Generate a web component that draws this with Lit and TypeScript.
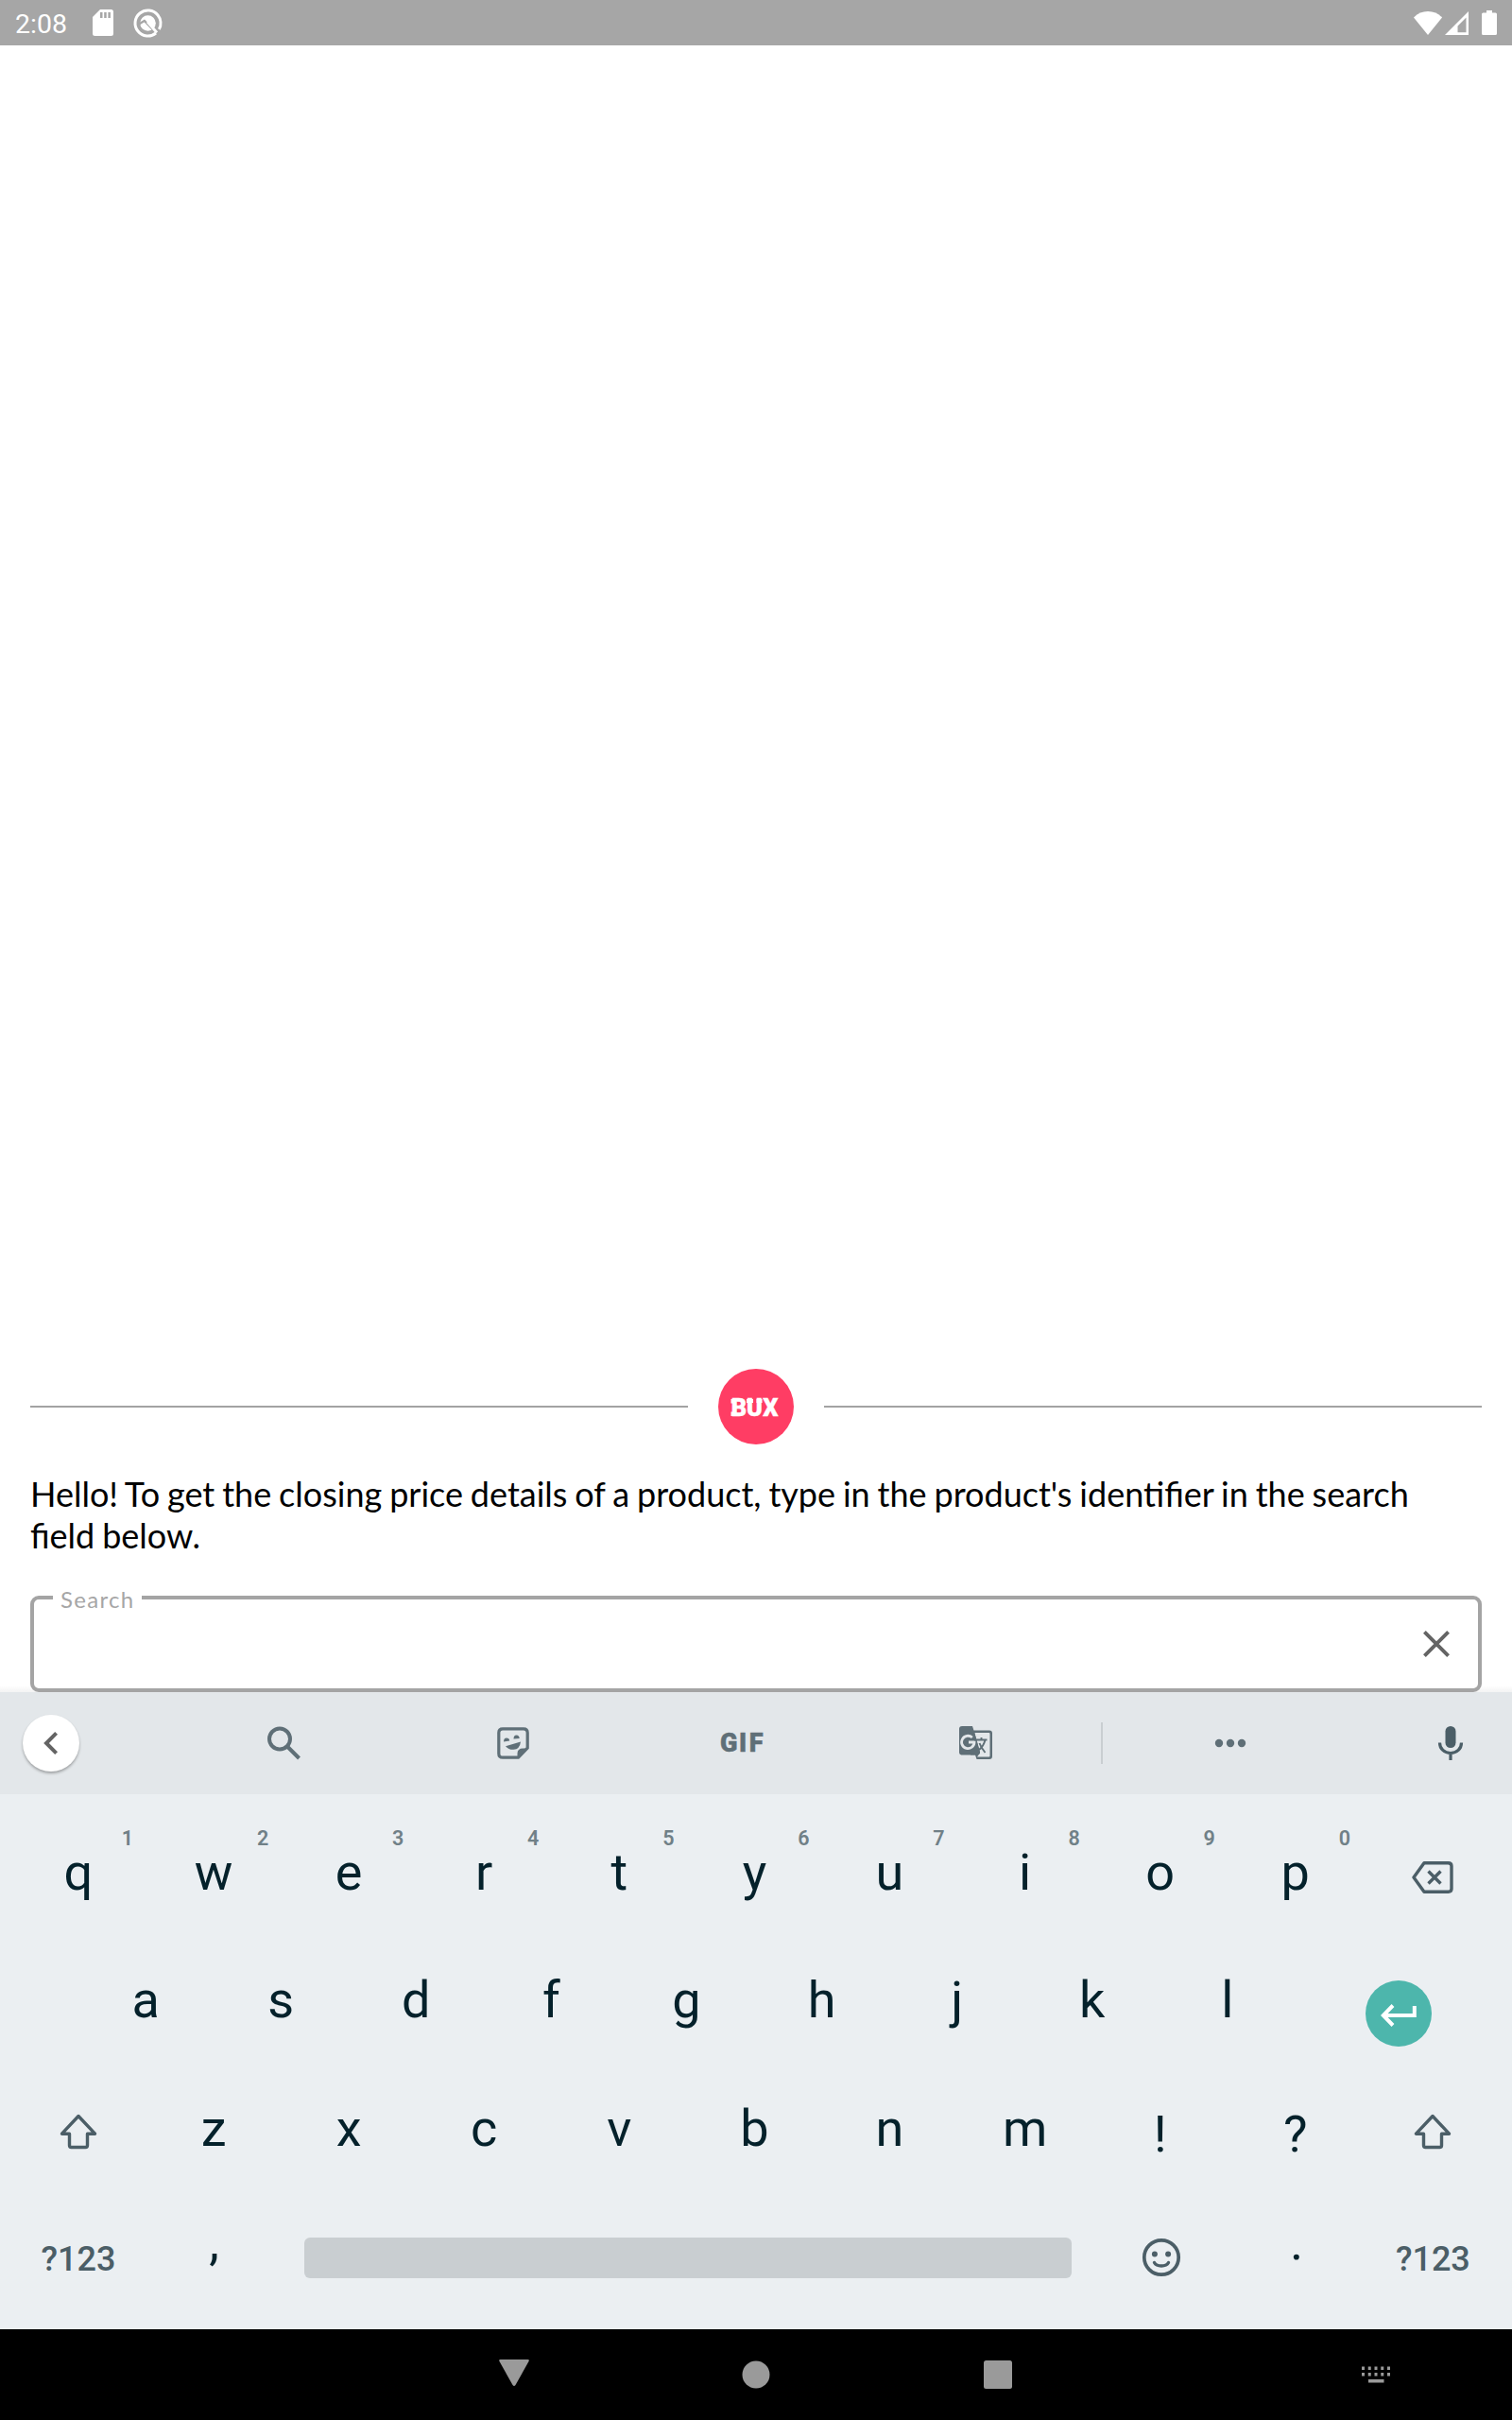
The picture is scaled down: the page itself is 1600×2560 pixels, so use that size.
import { LitElement, html, css, svg, nothing } from "lit";
import { customElement, property } from "lit/decorators.js";

type Glyph = ReturnType<typeof svg>;

const icon = (name: string, w: number, h: number, body: Glyph) =>
  html`<svg class="icon ${name}" width=${w} height=${h} viewBox="0 0 ${w} ${h}" aria-hidden="true">${body}</svg>`;

const sdCard = icon("sd", 22, 28, svg`<path fill-rule="evenodd" d="M8 0H19.5Q22 0 22 2.500V25.500Q22 28 19.500 28H2.500Q0 28 0 25.500V8ZM8 3V9H10.500V3ZM12.200 3V9H14.700V3ZM16.400 3V9H18.900V3Z"/>`);

const quick = icon("quick", 31, 31, svg`
  <circle cx="15.500" cy="15.500" r="13.500" fill="none" stroke="#fff" stroke-width="3" stroke-dasharray="79 5.800" transform="rotate(51 15.500 15.500)"/>
  <circle cx="15.500" cy="15.500" r="8.300"/>
  <path d="M6 16.500L11.800 13L22 23.500" fill="none" stroke="#a6a6a6" stroke-width="2.400"/>
  <path d="M15 14L25 25.500" stroke="#fff" stroke-width="2.800"/>`);

const wifi = icon("wifi", 30, 25, svg`<path d="M15 25L0 6.400Q6.500 0 15 0T30 6.400Z"/>`);
const signal = icon("signal", 25, 25, svg`<path fill-rule="evenodd" d="M25 0V25H0ZM22.500 6.500L13.500 15.500V22.300H22.500Z"/>`);
const battery = icon("battery", 16, 26, svg`<path d="M5 0H11V2.500H14.500Q16 2.500 16 4V24.500Q16 26 14.500 26H1.500Q0 26 0 24.500V4Q0 2.500 1.500 2.500H5Z"/>`);

const close = icon("close", 28, 28, svg`<path d="M1.400 1.400L26.600 26.600M26.600 1.400L1.400 26.600" fill="none" stroke="currentColor" stroke-width="3.900"/>`);
const chevron = icon("chevron", 15, 24, svg`<path d="M13.600 1.400L3 12L13.600 22.600" fill="none" stroke="currentColor" stroke-width="4"/>`);
const search = icon("search", 36, 36, svg`<g fill="none" stroke="currentColor" stroke-width="4"><circle cx="13" cy="13.500" r="11"/><path d="M21 21.500L33.500 34"/></g>`);
const sticker = icon("sticker", 34, 34, svg`
  <path d="M6 1.800H28Q32.200 1.800 32.200 6V22L22.500 32.200H6Q1.800 32.200 1.800 28V6Q1.800 1.800 6 1.800Z" fill="none" stroke="currentColor" stroke-width="3.200"/>
  <path d="M21.500 33V28Q21.500 22.500 27.500 22.500H33Z"/>
  <path d="M7 15.500Q7 11.500 10 11.500T13.200 14.500ZM17.500 12.500Q17.500 8.500 20.500 8.500T23.700 12Z"/>
  <path d="M9 20.200L25 15.500Q24 23.500 17.500 23.800Q12 24 9 20.200Z"/>`);
const translate = icon("translate", 36, 36, svg`
  <path d="M3 0H14L15.500 4.500H32Q35 4.500 35 7.500V32Q35 35 32 35H18.500L17 30.500H3Q0 30.500 0 27.500V3Q0 0 3 0Z"/>
  <path d="M16.300 7H31.500Q32.500 7 32.500 8V31.500Q32.500 32.500 31.500 32.500H19L22 28.500Z" fill="#e3e7ea"/>
  <path d="M16.300 7L22 27V29L18 30.500H12L10 10Z"/>
  <path d="M13.800 12A6.700 6.700 0 1 0 16 17H10" fill="none" stroke="#e3e7ea" stroke-width="2.800"/>
  <path d="M20.500 17L23 22L26 16Z" fill="#e3e7ea"/>
  <path d="M16 14.500H29.500M23.500 12V14.500M27.500 14.500Q26 21 21 25M21.500 18Q23 22.500 27.500 28" fill="none" stroke="currentColor" stroke-width="1.900"/>`);
const more = icon("more", 34, 10, svg`<circle cx="5" cy="5" r="4.200"/><circle cx="17" cy="5" r="4.200"/><circle cx="29" cy="5" r="4.200"/>`);
const mic = icon("mic", 26, 36, svg`<rect x="7.500" y="0" width="11" height="23" rx="5.500"/><path d="M1.500 17.500C1.500 24 6.500 28.500 13 28.500S24.500 24 24.500 17.500M13 28V36" fill="none" stroke="currentColor" stroke-width="3.200"/>`);
const backspace = icon("backspace", 44, 34, svg`<path d="M13 1.800H38.500Q42 1.800 42 5V29Q42 32.200 38.500 32.200H13L2 17Z" fill="none" stroke="currentColor" stroke-width="3.400" stroke-linejoin="round"/><path d="M17.500 10.500L30.500 23.500M30.500 10.500L17.500 23.500" fill="none" stroke="currentColor" stroke-width="3.400"/>`);
const shift = icon("shift", 40, 38, svg`<path d="M20 2.500L2.500 21.200H10.500V33.500Q10.500 35.500 12.500 35.500H27.500Q29.500 35.500 29.500 33.500V21.200H37.500Z" fill="none" stroke="currentColor" stroke-width="3.400" stroke-linejoin="round"/>`);
const enter = icon("enter", 38, 24, svg`<path d="M13 1.500L2.800 12L13 22.500M3 12H35.800V2" fill="none" stroke="currentColor" stroke-width="4"/>`);
const smile = icon("smile", 40, 40, svg`<circle cx="20" cy="20" r="18.200" fill="none" stroke="currentColor" stroke-width="3.700"/><circle cx="12.900" cy="16.400" r="3"/><circle cx="27.100" cy="16.400" r="3"/><path d="M12.500 25.500Q14.500 29 20 29T27.500 25.500" fill="none" stroke="currentColor" stroke-width="3.400" stroke-linecap="round"/>`);
const navBack = icon("nav-back", 32, 28, svg`<path d="M1.500 0H30.500Q32.500 0 31.500 2L17.500 27Q16 29 14.500 27L.5 2Q-.5 0 1.500 0Z"/>`);
const navHome = icon("nav-home", 30, 30, svg`<circle cx="15" cy="15" r="14.500"/>`);
const navRecent = icon("nav-recent", 30, 30, svg`<rect width="30" height="30" rx="2.500"/>`);
const navKeys = icon("nav-keys", 30, 18, svg`${[0, 6.75, 13.5, 20.25, 27].map(
  (x) => svg`<rect x=${x} y="0.500" width="3" height="3.500"/><rect x=${x} y="7" width="3" height="3.500"/>`,
)}<rect x="7" y="14" width="16.500" height="3.500"/>`);

@customElement("kb-key")
export class KbKey extends LitElement {
  @property() label = "";
  @property() hint = "";

  static styles = css`
    :host { display: block; position: relative; text-align: center; font: 400 54px/135.7px Roboto, sans-serif; color: #04212b; }
    .hint { position: absolute; left: 50%; top: 19.5px; width: 104px; font-size: 21.5px; line-height: 26px; font-weight: 600; color: #708087; }
  `;

  render() {
    return html`<span class="label">${this.label}</span>${this.hint ? html`<span class="hint">${this.hint}</span>` : nothing}`;
  }
}

@customElement("app-root")
export class AppRoot extends LitElement {
  static styles = css`
    :host { display: flex; flex-direction: column; width: 1600px; height: 2560px; background: #fff; overflow: hidden; font-family: Roboto, sans-serif; }
    * { box-sizing: border-box; }
    .icon { display: block; flex: none; fill: currentColor; overflow: visible; }

    .status { display: flex; align-items: center; height: 48px; padding: 0 16px; background: #a6a6a6; color: #fff; }
    .clock { font-size: 28.5px; line-height: 48px; width: 82px; padding-top: 3px; }
    .quick { margin-left: 21px; }
    .wifi { margin-left: auto; }
    .signal { margin: 0 14px 0 3px; }

    .screen { flex: 1; display: flex; flex-direction: column; justify-content: flex-end; padding: 0 32px; background: linear-gradient(to top, #f3f3f3, #fff 7px); }
    .brand { display: flex; align-items: center; gap: 32px; }
    .brand .rule { flex: 1; height: 2px; background: #a3a3a3; }
    .logo { display: block; width: 80px; height: 80px; }
    .logo text { font: 900 25.3px Roboto, sans-serif; fill: #fff; stroke: #fff; stroke-width: .5; }
    .prompt { margin: 30px 0 42px; padding-right: 40px; font: 400 36px/44px Lato, sans-serif; word-spacing: -1.3px; color: #000; }
    .field { position: relative; display: flex; align-items: center; justify-content: flex-end; height: 102px; padding-right: 30px; border: 4px solid #a4a4a4; border-radius: 9px; background: #fff; color: #646464; }
    .legend { position: absolute; left: 20px; top: -14px; padding: 0 8px 0 8px; background: #fff; font: 400 24px/28px Lato, sans-serif; letter-spacing: 1.3px; color: #a6a6a6; }

    .tools { display: flex; align-items: center; height: 108px; background: #e3e7ea; color: #5f6f77; }
    .fold { display: flex; align-items: center; justify-content: center; width: 60px; height: 60px; margin-left: 24px; padding-right: 2px; border-radius: 50%; background: #fff; color: #646464; box-shadow: 0 2px 3px rgba(0, 0, 0, .3); }
    .search { margin-left: 198.5px; }
    .sticker { margin-left: 207.5px; }
    .gif { flex: none; overflow: visible; margin-left: 202px; }
    .gif text { font: 900 27px Roboto, sans-serif; fill: currentColor; stroke: currentColor; stroke-width: .5; }
    .translate { margin-left: 203px; }
    .split { width: 2px; height: 44px; margin-left: 114px; background: #c9ced1; }
    .more { margin-left: 117.5px; }
    .mic { margin-left: 203.5px; color: #4b5e67; }

    .board { height: 566px; padding: 14.5px 11px 0 11.4px; background: #ebeff2; color: #4b5e67; }
    .row { display: grid; grid-template-columns: repeat(10, 143.1px) 1fr; grid-template-rows: 135.7px; height: 135.7px; }
    .row.mid { grid-template-columns: repeat(9, 143.1px) 1fr; padding-left: 71.2px; }
    .row.low { grid-template-columns: 143.1px 144.1px 859px 143.1px 143.1px 1fr; }
    .cell { display: flex; align-items: center; justify-content: center; }
    .backspace { margin-top: 11px; }
    .shift { margin-top: 6px; }
    .smile { margin-top: 1px; }
    .go { display: flex; align-items: center; justify-content: center; width: 70px; height: 70px; margin-top: 28px; border-radius: 50%; background: #4db6ac; color: #fff; }
    .enter { margin-top: 4px; }
    .mark { padding-top: 6px; }
    .raised { margin-top: -16px; }
    .space { align-self: center; justify-self: center; width: 812px; height: 43px; border-radius: 6px; background: #c9ced1; margin-top: 2px; }
    .mode { font-size: 36px; font-weight: 500; line-height: 42px; padding-top: 5px; }

    .nav { display: flex; align-items: center; height: 96px; background: #000; color: #9a9a9a; }
    .nav-back { margin: -4px 0 0 528px; }
    .nav-home { margin-left: 225px; }
    .nav-recent { margin-left: 226px; }
    .nav-keys { margin-left: 370px; }
  `;

  private top = [..."qwertyuiop"];
  private home = [..."asdfghjkl"];
  private bottom = [..."zxcvbnm!?"];

  render() {
    return html`
      <header class="status">
        <span class="clock">2:08</span>${sdCard}${quick}${wifi}${signal}${battery}
      </header>
      <main class="screen">
        <div class="brand">
          <span class="rule"></span>
          <svg class="logo" viewBox="0 0 80 80">
            <circle cx="40" cy="40" r="40" fill="#ff3d64" />
            <text x="13.800 29.900 47.200" y="50">BUX</text>
            <path d="M13.500 32H18V36.500H13.500ZM13.500 45.500H18V50H13.500ZM30 32H37V36H30ZM40.500 32H46.500V36H40.500Z" fill="#fff" />
          </svg>
          <span class="rule"></span>
        </div>
        <p class="prompt">Hello! To get the closing price details of a product, type in the product's identifier in the search field below.</p>
        <div class="field"><span class="legend">Search</span>${close}</div>
      </main>
      <section class="tools">
        <span class="fold">${chevron}</span>${search}${sticker}
        <svg class="gif" width="50" height="36" viewBox="0 0 50 36"><text x="0 20 30.800" y="27">GIF</text></svg>
        ${translate}<span class="split"></span>${more}${mic}
      </section>
      <section class="board">
        <div class="row">
          ${this.top.map((c, i) => html`<kb-key label=${c} hint=${String((i + 1) % 10)}></kb-key>`)}
          <span class="cell">${backspace}</span>
        </div>
        <div class="row mid">
          ${this.home.map((c) => html`<kb-key label=${c}></kb-key>`)}
          <span class="cell"><span class="go">${enter}</span></span>
        </div>
        <div class="row">
          <span class="cell">${shift}</span>
          ${this.bottom.map((c) => html`<kb-key class=${/\w/.test(c) ? "" : "mark"} label=${c}></kb-key>`)}
          <span class="cell">${shift}</span>
        </div>
        <div class="row low">
          <span class="cell mode">?123</span>
          <kb-key class="raised" label=","></kb-key>
          <span class="space"></span>
          <span class="cell">${smile}</span>
          <kb-key class="raised" label="."></kb-key>
          <span class="cell mode">?123</span>
        </div>
      </section>
      <footer class="nav">${navBack}${navHome}${navRecent}${navKeys}</footer>
    `;
  }
}
